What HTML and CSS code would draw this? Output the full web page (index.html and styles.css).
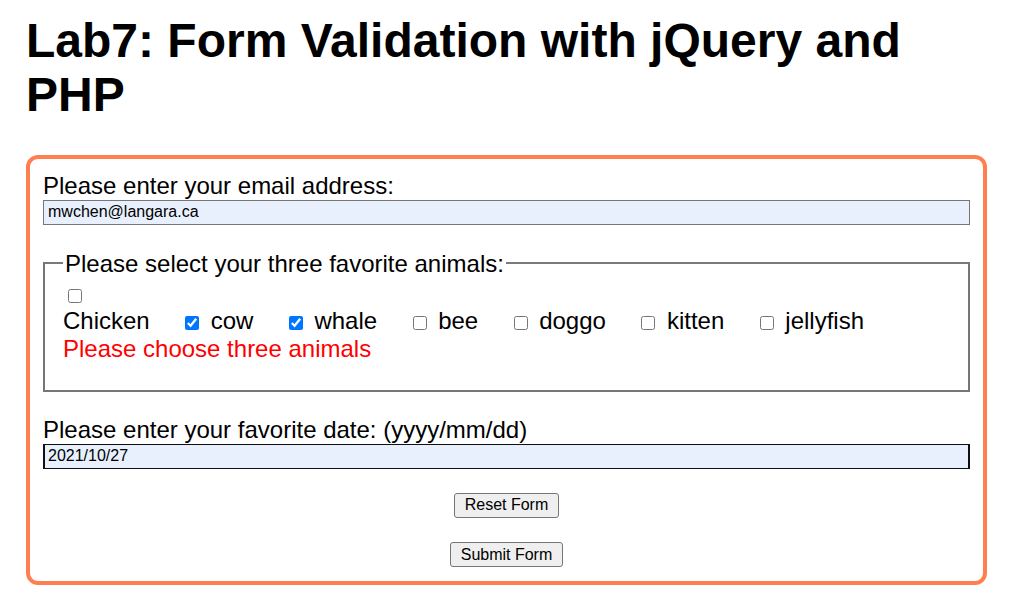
FILE: index.html
```html
<!DOCTYPE html>
<html lang="en">
<head>
<meta charset="utf-8">
<title>Lab7: Form Validation with jQuery and PHP</title>
<link rel="stylesheet" href="styles.css">
</head>
<body>
<h1 class="title">Lab7: Form Validation with jQuery and PHP</h1>
<form class="lab-form">
  <label class="field-label" for="email">Please enter your email address:</label>
  <input class="text-input email-input" id="email" type="text" value="mwchen@langara.ca">

  <fieldset class="animals">
    <legend class="animals-legend">Please select your three favorite animals:</legend>
    <div class="first-check"><input class="check" type="checkbox"></div>
    <div class="options">
      <span class="opt">Chicken</span>
      <label class="opt"><input class="check" type="checkbox" checked>cow</label>
      <label class="opt"><input class="check" type="checkbox" checked>whale</label>
      <label class="opt"><input class="check" type="checkbox">bee</label>
      <label class="opt"><input class="check" type="checkbox">doggo</label>
      <label class="opt"><input class="check" type="checkbox">kitten</label>
      <label class="opt"><input class="check" type="checkbox">jellyfish</label>
    </div>
    <div class="error">Please choose three animals</div>
  </fieldset>

  <label class="field-label date-label" for="date">Please enter your favorite date: (yyyy/mm/dd)</label>
  <input class="text-input date-input" id="date" type="text" value="2021/10/27">

  <div class="actions">
    <button class="btn" type="reset">Reset Form</button>
    <button class="btn" type="submit">Submit Form</button>
  </div>
</form>
</body>
</html>
```

FILE: styles.css
```css
html, body {
  margin: 0;
  background: #ffffff;
}

body {
  padding: 14px 23px 0 26px;
  font-family: "Liberation Sans", Arial, sans-serif;
  color: #000000;
}

.title {
  margin: 0;
  font-size: 48px;
  line-height: 54px;
  font-weight: bold;
}

.lab-form {
  margin-top: 33px;
  border: 4px solid #ff7f50;
  border-radius: 12px;
  padding: 13px 13px 14px;
  display: flex;
  flex-direction: column;
}

.field-label {
  display: block;
  font-size: 24px;
  line-height: 27.6px;
}

.text-input {
  display: block;
  box-sizing: border-box;
  width: 100%;
  height: 25px;
  margin: 0;
  padding: 1px 4px;
  font-family: "Liberation Sans", Arial, sans-serif;
  font-size: 16px;
  color: #000000;
  background: #e8f0fe;
  border: 1px solid #767676;
  border-radius: 0;
  outline: none;
}

.email-input {
  margin-top: 0;
}

.animals {
  margin: 25px 0 0 0;
  padding: 0 18px 28px;
  border: 2px solid #767676;
  border-top-color: #7a7a7a;
  font-size: 24px;
  line-height: 27.6px;
}

.animals-legend {
  padding: 0 2px;
  font-size: 24px;
  line-height: 27.6px;
}

.check {
  width: 14px;
  height: 14px;
  margin: 0;
}

.first-check {
  padding: 12px 0 0 5px;
  height: 14px;
}

.first-check .check {
  display: block;
}

.options {
  margin-top: 4px;
  display: flex;
  flex-wrap: wrap;
  align-items: baseline;
  column-gap: 35.5px;
}

.opt {
  display: inline-flex;
  align-items: baseline;
}

.opt .check {
  margin-right: 11.5px;
  align-self: flex-end;
  margin-bottom: 5px;
}

.error {
  color: #ff0000;
}

.date-label {
  margin-top: 24px;
}

.date-input {
  margin-top: 0;
  padding-left: 3px;
  border: 1px solid #101010;
  border-left-width: 2px;
  border-right-width: 2px;
}

.actions {
  display: flex;
  flex-direction: column;
  align-items: center;
  gap: 24.5px;
  margin-top: 24px;
}

.btn {
  box-sizing: border-box;
  height: 25px;
  margin: 0;
  padding: 0 9.5px;
  font-family: "Liberation Sans", Arial, sans-serif;
  font-size: 16px;
  color: #000000;
  background: #efefef;
  border: 1px solid #767676;
  border-radius: 3px;
}
```
